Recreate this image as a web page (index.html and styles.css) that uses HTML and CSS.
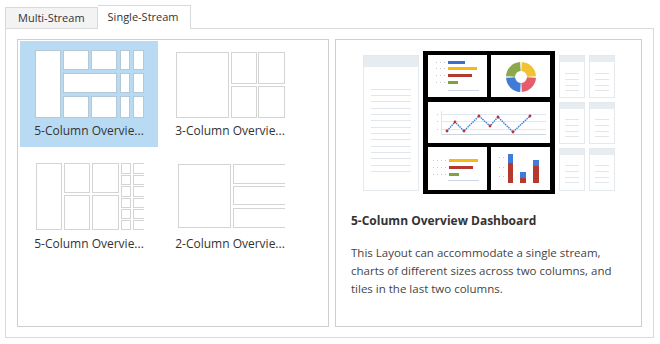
FILE: index.html
```html
<!DOCTYPE html>
<html>
<head>
<meta charset="utf-8">
<link rel="stylesheet" href="styles.css">
</head>
<body>
<div class="dialog">
  <div class="tabs">
    <div class="tab">Multi-Stream</div>
    <div class="tab active">Single-Stream</div>
  </div>
  <div class="panel">
    <div class="layouts">
      <div class="tile selected">
        <svg class="thumb" width="110" height="70" viewBox="34 49 110 70">
          <g class="dots">
            <rect x="35.5" y="50.5" width="25" height="67"/>
            <rect x="63.5" y="50.5" width="25" height="19"/>
            <rect x="91.5" y="50.5" width="25" height="19"/>
            <rect x="120.5" y="50.5" width="9" height="19"/>
            <rect x="133.5" y="50.5" width="10" height="19"/>
            <rect x="63.5" y="73.5" width="53" height="19"/>
            <rect x="120.5" y="73.5" width="9" height="19"/>
            <rect x="133.5" y="73.5" width="10" height="19"/>
            <rect x="63.5" y="96.5" width="25" height="21"/>
            <rect x="91.5" y="96.5" width="25" height="21"/>
            <rect x="120.5" y="96.5" width="9" height="21"/>
            <rect x="133.5" y="96.5" width="10" height="21"/>
          </g>
        </svg>
        <div class="label">5-Column Overvie...</div>
      </div>
      <div class="tile">
        <svg class="thumb" width="110" height="70" viewBox="175 49 110 70">
          <g class="dots">
            <rect x="176.5" y="52.5" width="52" height="65"/>
            <rect x="231.5" y="52.5" width="25" height="31"/>
            <rect x="258.5" y="52.5" width="26" height="31"/>
            <rect x="231.5" y="86.5" width="25" height="31"/>
            <rect x="258.5" y="86.5" width="26" height="31"/>
          </g>
        </svg>
        <div class="label">3-Column Overvie...</div>
      </div>
      <div class="tile">
        <svg class="thumb" width="110" height="70" viewBox="34 163 110 70">
          <g class="dots">
            <rect x="36.5" y="164.5" width="25" height="66"/>
            <rect x="64.5" y="164.5" width="25" height="29"/>
            <rect x="64.5" y="196.5" width="25" height="34"/>
            <rect x="92.5" y="164.5" width="26" height="29"/>
            <rect x="92.5" y="196.5" width="26" height="34"/>
            <rect x="121.5" y="164.5" width="9" height="10"/>
            <rect x="121.5" y="176.5" width="9" height="9"/>
            <rect x="121.5" y="187.5" width="9" height="10"/>
            <rect x="121.5" y="199.5" width="9" height="9"/>
            <rect x="121.5" y="210.5" width="9" height="9"/>
            <rect x="121.5" y="221.5" width="9" height="9"/>
            <rect x="133.5" y="164.5" width="11" height="10"/>
            <rect x="133.5" y="176.5" width="11" height="9"/>
            <rect x="133.5" y="187.5" width="11" height="10"/>
            <rect x="133.5" y="199.5" width="11" height="9"/>
            <rect x="133.5" y="210.5" width="11" height="9"/>
            <rect x="133.5" y="221.5" width="11" height="9"/>
          </g>
        </svg>
        <div class="label">5-Column Overvie...</div>
      </div>
      <div class="tile">
        <svg class="thumb" width="110" height="70" viewBox="175 163 110 70">
          <g class="dots">
            <rect x="178.5" y="165.5" width="52" height="63"/>
            <rect x="233.5" y="165.5" width="53" height="19"/>
            <rect x="233.5" y="187.5" width="53" height="18"/>
            <rect x="233.5" y="209.5" width="53" height="19"/>
          </g>
        </svg>
        <div class="label">2-Column Overvie...</div>
      </div>
    </div>
    <div class="detail">
      <svg class="preview" width="256" height="146" viewBox="360 50 256 146">
        <!-- faded left column -->
        <rect x="362.5" y="55.5" width="55" height="135" fill="#fff" stroke="#e4e9ee"/>
        <rect x="363" y="56" width="54" height="11" fill="#e7ecf1"/>
        <g stroke="#e1e6ec" stroke-width="1">
          <line x1="370" y1="89.5" x2="410" y2="89.5"/>
          <line x1="370" y1="95.5" x2="410" y2="95.5"/>
          <line x1="370" y1="101.5" x2="410" y2="101.5"/>
          <line x1="370" y1="108.5" x2="410" y2="108.5"/>
          <line x1="370" y1="114.5" x2="410" y2="114.5"/>
          <line x1="370" y1="120.5" x2="410" y2="120.5"/>
          <line x1="370" y1="127.5" x2="410" y2="127.5"/>
          <line x1="370" y1="133.5" x2="410" y2="133.5"/>
          <line x1="370" y1="139.5" x2="410" y2="139.5"/>
          <line x1="370" y1="146.5" x2="410" y2="146.5"/>
          <line x1="370" y1="152.5" x2="410" y2="152.5"/>
          <line x1="370" y1="158.5" x2="410" y2="158.5"/>
          <line x1="370" y1="165.5" x2="410" y2="165.5"/>
          <line x1="370" y1="171.5" x2="410" y2="171.5"/>
        </g>
        <!-- faded right tiles -->
        <g fill="#fff" stroke="#e4e9ee">
          <rect x="558.5" y="55.5" width="25" height="42"/>
          <rect x="588.5" y="55.5" width="25" height="42"/>
          <rect x="558.5" y="102.5" width="25" height="41"/>
          <rect x="588.5" y="102.5" width="25" height="41"/>
          <rect x="558.5" y="148.5" width="25" height="42"/>
          <rect x="588.5" y="148.5" width="25" height="42"/>
        </g>
        <g fill="#e7ecf1">
          <rect x="559" y="56" width="24" height="6"/>
          <rect x="589" y="56" width="24" height="6"/>
          <rect x="559" y="103" width="24" height="6"/>
          <rect x="589" y="103" width="24" height="6"/>
          <rect x="559" y="149" width="24" height="6"/>
          <rect x="589" y="149" width="24" height="6"/>
        </g>
        <g stroke="#e1e6ec">
          <line x1="564" y1="73.5" x2="578" y2="73.5"/><line x1="594" y1="73.5" x2="608" y2="73.5"/>
          <line x1="564" y1="79.5" x2="578" y2="79.5"/><line x1="594" y1="79.5" x2="608" y2="79.5"/>
          <line x1="564" y1="85.5" x2="578" y2="85.5"/><line x1="594" y1="85.5" x2="608" y2="85.5"/>
          <line x1="564" y1="90.5" x2="578" y2="90.5"/><line x1="594" y1="90.5" x2="608" y2="90.5"/>
          <line x1="564" y1="119.5" x2="578" y2="119.5"/><line x1="594" y1="119.5" x2="608" y2="119.5"/>
          <line x1="564" y1="125.5" x2="578" y2="125.5"/><line x1="594" y1="125.5" x2="608" y2="125.5"/>
          <line x1="564" y1="131.5" x2="578" y2="131.5"/><line x1="594" y1="131.5" x2="608" y2="131.5"/>
          <line x1="564" y1="136.5" x2="578" y2="136.5"/><line x1="594" y1="136.5" x2="608" y2="136.5"/>
          <line x1="564" y1="165.5" x2="578" y2="165.5"/><line x1="594" y1="165.5" x2="608" y2="165.5"/>
          <line x1="564" y1="171.5" x2="578" y2="171.5"/><line x1="594" y1="171.5" x2="608" y2="171.5"/>
          <line x1="564" y1="177.5" x2="578" y2="177.5"/><line x1="594" y1="177.5" x2="608" y2="177.5"/>
          <line x1="564" y1="182.5" x2="578" y2="182.5"/><line x1="594" y1="182.5" x2="608" y2="182.5"/>
        </g>
        <!-- black frame -->
        <rect x="422" y="51" width="132" height="143" fill="#000"/>
        <g fill="#fff">
          <rect x="427" y="55" width="59" height="42"/>
          <rect x="490" y="55" width="59" height="42"/>
          <rect x="427" y="102" width="122" height="41"/>
          <rect x="427" y="147" width="59" height="43"/>
          <rect x="490" y="147" width="59" height="43"/>
        </g>
        <!-- bar chart top-left -->
        <g fill="#c3c9d3">
          <rect x="435" y="62" width="1" height="1"/><rect x="439" y="62" width="1" height="1"/><rect x="443" y="62" width="1" height="1"/>
          <rect x="435" y="68" width="1" height="1"/><rect x="439" y="68" width="1" height="1"/><rect x="443" y="68" width="1" height="1"/>
          <rect x="435" y="75" width="1" height="1"/><rect x="439" y="75" width="1" height="1"/><rect x="443" y="75" width="1" height="1"/>
          <rect x="435" y="82" width="1" height="1"/><rect x="439" y="82" width="1" height="1"/><rect x="443" y="82" width="1" height="1"/>
        </g>
        <rect x="447" y="61" width="17" height="3" fill="#3b6fcf"/>
        <rect x="447" y="67" width="29" height="3" fill="#f5b912"/>
        <rect x="447" y="74" width="24" height="3" fill="#b43a2f"/>
        <rect x="447" y="81" width="10" height="3" fill="#80a33d"/>
        <line x1="447" y1="90.5" x2="478" y2="90.5" stroke="#cdd5e0"/>
        <!-- donut -->
        <g fill="none" stroke-width="9">
          <circle cx="520" cy="77" r="10.5" stroke="#f3c233" stroke-dasharray="15.2 60" transform="rotate(273 520 77)"/>
          <circle cx="520" cy="77" r="10.5" stroke="#e35d6b" stroke-dasharray="15.2 60" transform="rotate(3 520 77)"/>
          <circle cx="520" cy="77" r="10.5" stroke="#3f7bd7" stroke-dasharray="15.2 60" transform="rotate(93 520 77)"/>
          <circle cx="520" cy="77" r="10.5" stroke="#8ca74c" stroke-dasharray="15.2 60" transform="rotate(183 520 77)"/>
        </g>
        <!-- line chart -->
        <g stroke="#e1e8f3">
          <line x1="440" y1="114.5" x2="545" y2="114.5"/>
          <line x1="440" y1="121.5" x2="545" y2="121.5"/>
          <line x1="440" y1="129.5" x2="545" y2="129.5"/>
        </g>
        <line x1="440" y1="134.5" x2="545" y2="134.5" stroke="#cdd5e0"/>
        <line x1="440.5" y1="111" x2="440.5" y2="135" stroke="#dfe5ee"/>
        <g fill="#c3c9d3">
          <rect x="436" y="114" width="1" height="1"/><rect x="436" y="121" width="1" height="1"/><rect x="436" y="129" width="1" height="1"/>
        </g>
        <polyline points="446,131 454,122 463,131 478,116 489,126 497,117 512,132 529,116" fill="none" stroke="#3b79d6" stroke-width="1.4" stroke-dasharray="1.5 0.8"/>
        <g fill="#c4312b">
          <circle cx="446" cy="131" r="1.4"/><circle cx="454" cy="122" r="1.4"/><circle cx="463" cy="131" r="1.4"/>
          <circle cx="478" cy="116" r="1.4"/><circle cx="489" cy="126" r="1.4"/><circle cx="497" cy="117" r="1.4"/>
          <circle cx="512" cy="132" r="1.4"/><circle cx="529" cy="116" r="1.4"/>
        </g>
        <!-- bar chart bottom-left -->
        <g fill="#c3c9d3">
          <rect x="432" y="160" width="1" height="1"/><rect x="436" y="160" width="1" height="1"/><rect x="440" y="160" width="1" height="1"/><rect x="444" y="160" width="1" height="1"/>
          <rect x="432" y="167" width="1" height="1"/><rect x="436" y="167" width="1" height="1"/><rect x="440" y="167" width="1" height="1"/><rect x="444" y="167" width="1" height="1"/>
          <rect x="432" y="174" width="1" height="1"/><rect x="436" y="174" width="1" height="1"/><rect x="440" y="174" width="1" height="1"/><rect x="444" y="174" width="1" height="1"/>
        </g>
        <rect x="448" y="159" width="29" height="3" fill="#f5b912"/>
        <rect x="448" y="166" width="24" height="3" fill="#b43a2f"/>
        <rect x="448" y="173" width="10" height="3" fill="#80a33d"/>
        <line x1="447" y1="180.5" x2="478" y2="180.5" stroke="#cdd5e0"/>
        <!-- column chart -->
        <g fill="#c3c9d3">
          <rect x="498" y="157" width="1" height="1"/><rect x="502" y="157" width="1" height="1"/>
          <rect x="498" y="167" width="1" height="1"/><rect x="502" y="167" width="1" height="1"/>
          <rect x="498" y="176" width="1" height="1"/><rect x="502" y="176" width="1" height="1"/>
        </g>
        <rect x="507" y="154" width="5" height="9" fill="#3f7bd7"/>
        <rect x="507" y="163" width="5" height="20" fill="#b43a2f"/>
        <rect x="519" y="172" width="6" height="6" fill="#3f7bd7"/>
        <rect x="519" y="178" width="6" height="5" fill="#b43a2f"/>
        <rect x="532" y="160" width="6" height="6" fill="#3f7bd7"/>
        <rect x="532" y="166" width="6" height="17" fill="#b43a2f"/>
      </svg>
      <div class="title">5-Column Overview Dashboard</div>
      <p class="desc">This Layout can accommodate a single stream,<br>charts of different sizes across two columns, and<br>tiles in the last two columns.</p>
    </div>
  </div>
</div>
</body>
</html>
```
FILE: styles.css
```css
* { box-sizing: border-box; }
body {
  margin: 0;
  background: #fff;
  font-family: "Open Sans", "Noto Sans", sans-serif;
  font-size: 11px;
  color: #333;
}
.dialog {
  padding: 5px 0 0 5px;
  width: 654px;
}
.tabs {
  display: flex;
  align-items: flex-end;
  height: 23px;
}
.tab {
  height: 21px;
  line-height: 19px;
  padding: 0 12px;
  border: 1px solid #d9d9d9;
  border-bottom: none;
  background: #f3f3f3;
  color: #333;
  white-space: nowrap;
}
.tab.active {
  height: 24px;
  line-height: 22px;
  margin-bottom: -1px;
  padding: 0 11px 0 10px;
  border-left: none;
  background: #fff;
  position: relative;
  z-index: 1;
}
.panel {
  display: flex;
  gap: 6px;
  width: 649px;
  height: 310px;
  padding: 10px 11px;
  border: 1px solid #dadada;
}
.layouts {
  width: 312px;
  height: 288px;
  border: 1px solid #cfcfcf;
  padding: 1px 2px;
  display: grid;
  grid-template-columns: 138px 138px;
  grid-template-rows: 106px 106px;
  column-gap: 3px;
  row-gap: 7px;
  align-content: start;
}
.tile {
  display: flex;
  flex-direction: column;
  align-items: center;
  padding-top: 8px;
}
.tile.selected {
  background: #b9daf3;
}
.thumb { display: block; }
.dots rect {
  fill: none;
  stroke: #a8a8a8;
  stroke-width: 1;
  stroke-dasharray: 1 1;
}
.selected .dots rect {
  fill: #fff;
  stroke: #8ea3b6;
}
.label {
  margin-top: 4px;
  line-height: 16px;
  font-size: 12px;
  color: #333;
  white-space: nowrap;
}
.detail {
  width: 307px;
  height: 288px;
  border: 1px solid #cfcfcf;
  padding-top: 10px;
  display: flex;
  flex-direction: column;
}
.preview {
  display: block;
  align-self: center;
  flex: none;
}
.title {
  margin-top: 16px;
  padding: 0 15px;
  line-height: 18px;
  font-size: 12px;
  font-weight: 700;
  color: #333;
}
.desc {
  margin: 14px 0 0;
  padding: 0 15px;
  line-height: 18px;
  font-size: 11.5px;
  color: #444;
  white-space: nowrap;
}
```
